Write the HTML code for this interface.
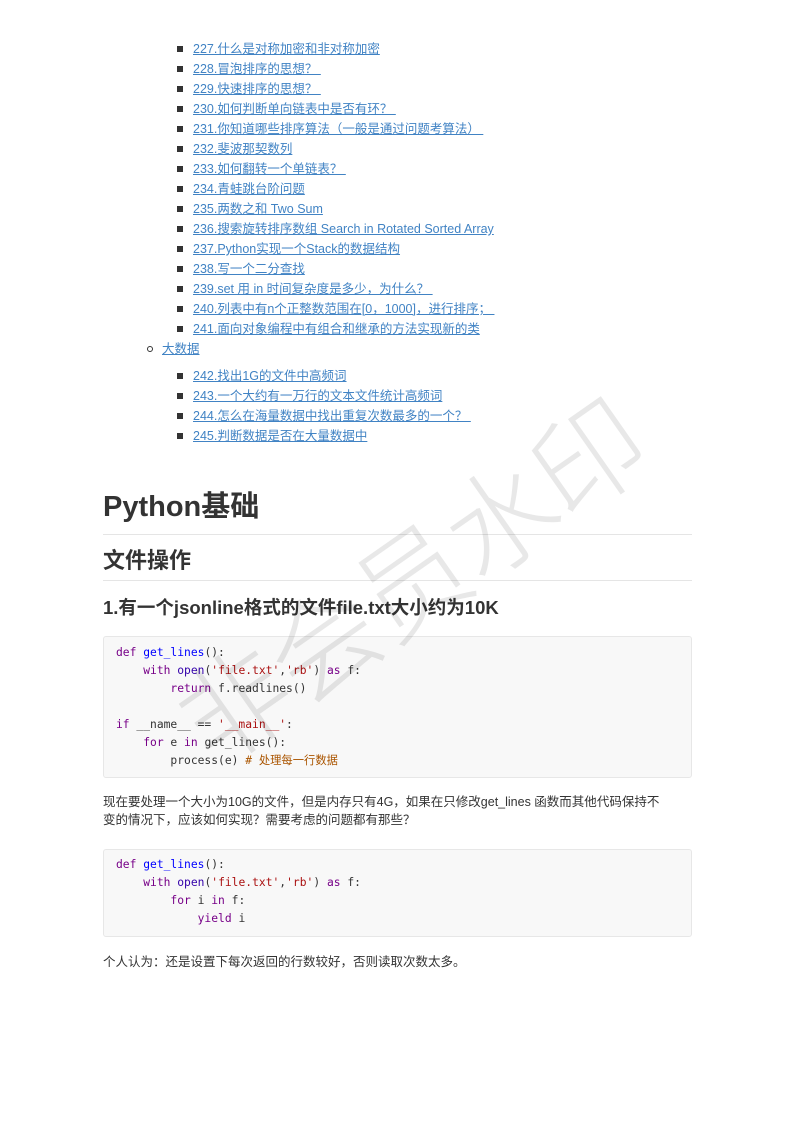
<!DOCTYPE html>
<html><head><meta charset="utf-8"><style>
body{margin:0;width:793px;height:1122px;background:#fff;position:relative;overflow:hidden;font-family:"Liberation Sans","Noto Sans CJK SC",sans-serif;color:#333}
.wm{position:absolute;left:140px;top:665px;font-family:"Noto Sans CJK SC",sans-serif;font-weight:300;font-size:110px;color:rgba(0,0,0,0.09);transform:rotate(-35deg);transform-origin:left top;white-space:nowrap;letter-spacing:-2px;z-index:5}
.li{position:absolute;font-size:12.5px;line-height:16px;color:#4183c4;text-decoration:underline;white-space:nowrap;z-index:1}
.sq{position:absolute;width:6px;height:6px;background:#333;z-index:1}
.ci{position:absolute;width:4px;height:4px;border:1px solid #333;border-radius:50%}
h1,h2,h3{margin:0;position:absolute;left:103px;font-weight:bold;color:#333;white-space:nowrap;z-index:1}
.rule{position:absolute;left:103px;width:589px;height:1px;background:#e5e5e5}
.code{position:absolute;left:103px;width:587px;background:#f8f8f8;border:1px solid #e7e7e7;border-radius:3px;z-index:1}
pre{margin:0;position:absolute;left:12px;font-family:"DejaVu Sans Mono","Liberation Mono","Noto Sans CJK SC",monospace;font-size:11.3px;line-height:18px;color:#333}
.k{color:#770088}.d{color:#0000ff}.s{color:#aa1111}.c{color:#aa5500}.b{color:#3300aa}
p{margin:0;position:absolute;left:103px;font-size:12.5px;line-height:18px;z-index:1;white-space:nowrap}
</style></head><body>
<div class="wm">非会员水印</div>

<div class="sq" style="left:177px;top:46px"></div><div class="li" style="left:193px;top:41px">227.什么是对称加密和非对称加密</div>
<div class="sq" style="left:177px;top:66px"></div><div class="li" style="left:193px;top:61px">228.冒泡排序的思想？&nbsp;</div>
<div class="sq" style="left:177px;top:86px"></div><div class="li" style="left:193px;top:81px">229.快速排序的思想？&nbsp;</div>
<div class="sq" style="left:177px;top:106px"></div><div class="li" style="left:193px;top:101px">230.如何判断单向链表中是否有环？&nbsp;</div>
<div class="sq" style="left:177px;top:126px"></div><div class="li" style="left:193px;top:121px">231.你知道哪些排序算法（一般是通过问题考算法）&nbsp;</div>
<div class="sq" style="left:177px;top:146px"></div><div class="li" style="left:193px;top:141px">232.斐波那契数列</div>
<div class="sq" style="left:177px;top:166px"></div><div class="li" style="left:193px;top:161px">233.如何翻转一个单链表？&nbsp;</div>
<div class="sq" style="left:177px;top:186px"></div><div class="li" style="left:193px;top:181px">234.青蛙跳台阶问题</div>
<div class="sq" style="left:177px;top:206px"></div><div class="li" style="left:193px;top:201px">235.两数之和 Two Sum</div>
<div class="sq" style="left:177px;top:226px"></div><div class="li" style="left:193px;top:221px">236.搜索旋转排序数组 Search in Rotated Sorted Array</div>
<div class="sq" style="left:177px;top:246px"></div><div class="li" style="left:193px;top:241px">237.Python实现一个Stack的数据结构</div>
<div class="sq" style="left:177px;top:266px"></div><div class="li" style="left:193px;top:261px">238.写一个二分查找</div>
<div class="sq" style="left:177px;top:286px"></div><div class="li" style="left:193px;top:281px">239.set 用 in 时间复杂度是多少，为什么？&nbsp;</div>
<div class="sq" style="left:177px;top:306px"></div><div class="li" style="left:193px;top:301px">240.列表中有n个正整数范围在[0，1000]，进行排序；&nbsp;</div>
<div class="sq" style="left:177px;top:326px"></div><div class="li" style="left:193px;top:321px">241.面向对象编程中有组合和继承的方法实现新的类</div>
<div class="ci" style="left:147px;top:346px"></div><div class="li" style="left:162px;top:341px">大数据</div>
<div class="sq" style="left:177px;top:373px"></div><div class="li" style="left:193px;top:368px">242.找出1G的文件中高频词</div>
<div class="sq" style="left:177px;top:393px"></div><div class="li" style="left:193px;top:388px">243.一个大约有一万行的文本文件统计高频词</div>
<div class="sq" style="left:177px;top:413px"></div><div class="li" style="left:193px;top:408px">244.怎么在海量数据中找出重复次数最多的一个？&nbsp;</div>
<div class="sq" style="left:177px;top:433px"></div><div class="li" style="left:193px;top:428px">245.判断数据是否在大量数据中</div>

<h1 style="top:487px;font-size:29px;line-height:40px">Python基础</h1>
<div class="rule" style="top:534px"></div>
<h2 style="top:546px;font-size:22px;line-height:30px">文件操作</h2>
<div class="rule" style="top:580px"></div>
<h3 style="top:595px;font-size:18.5px;line-height:26px">1.有一个jsonline格式的文件file.txt大小约为10K</h3>

<div class="code" style="top:636px;height:140px"><pre style="top:7px"><span class="k">def</span> <span class="d">get_lines</span>():
    <span class="k">with</span> <span class="b">open</span>(<span class="s">'file.txt'</span>,<span class="s">'rb'</span>) <span class="k">as</span> f:
        <span class="k">return</span> f.readlines()

<span class="k">if</span> __name__ == <span class="s">'__main__'</span>:
    <span class="k">for</span> e <span class="k">in</span> get_lines():
        process(e) <span class="c"># 处理每一行数据</span></pre></div>

<p style="top:793px">现在要处理一个大小为10G的文件，但是内存只有4G，如果在只修改get_lines 函数而其他代码保持不<br>变的情况下，应该如何实现？需要考虑的问题都有那些？</p>

<div class="code" style="top:849px;height:86px"><pre style="top:6px"><span class="k">def</span> <span class="d">get_lines</span>():
    <span class="k">with</span> <span class="b">open</span>(<span class="s">'file.txt'</span>,<span class="s">'rb'</span>) <span class="k">as</span> f:
        <span class="k">for</span> i <span class="k">in</span> f:
            <span class="k">yield</span> i</pre></div>

<p style="top:953px">个人认为：还是设置下每次返回的行数较好，否则读取次数太多。</p>
</body></html>
